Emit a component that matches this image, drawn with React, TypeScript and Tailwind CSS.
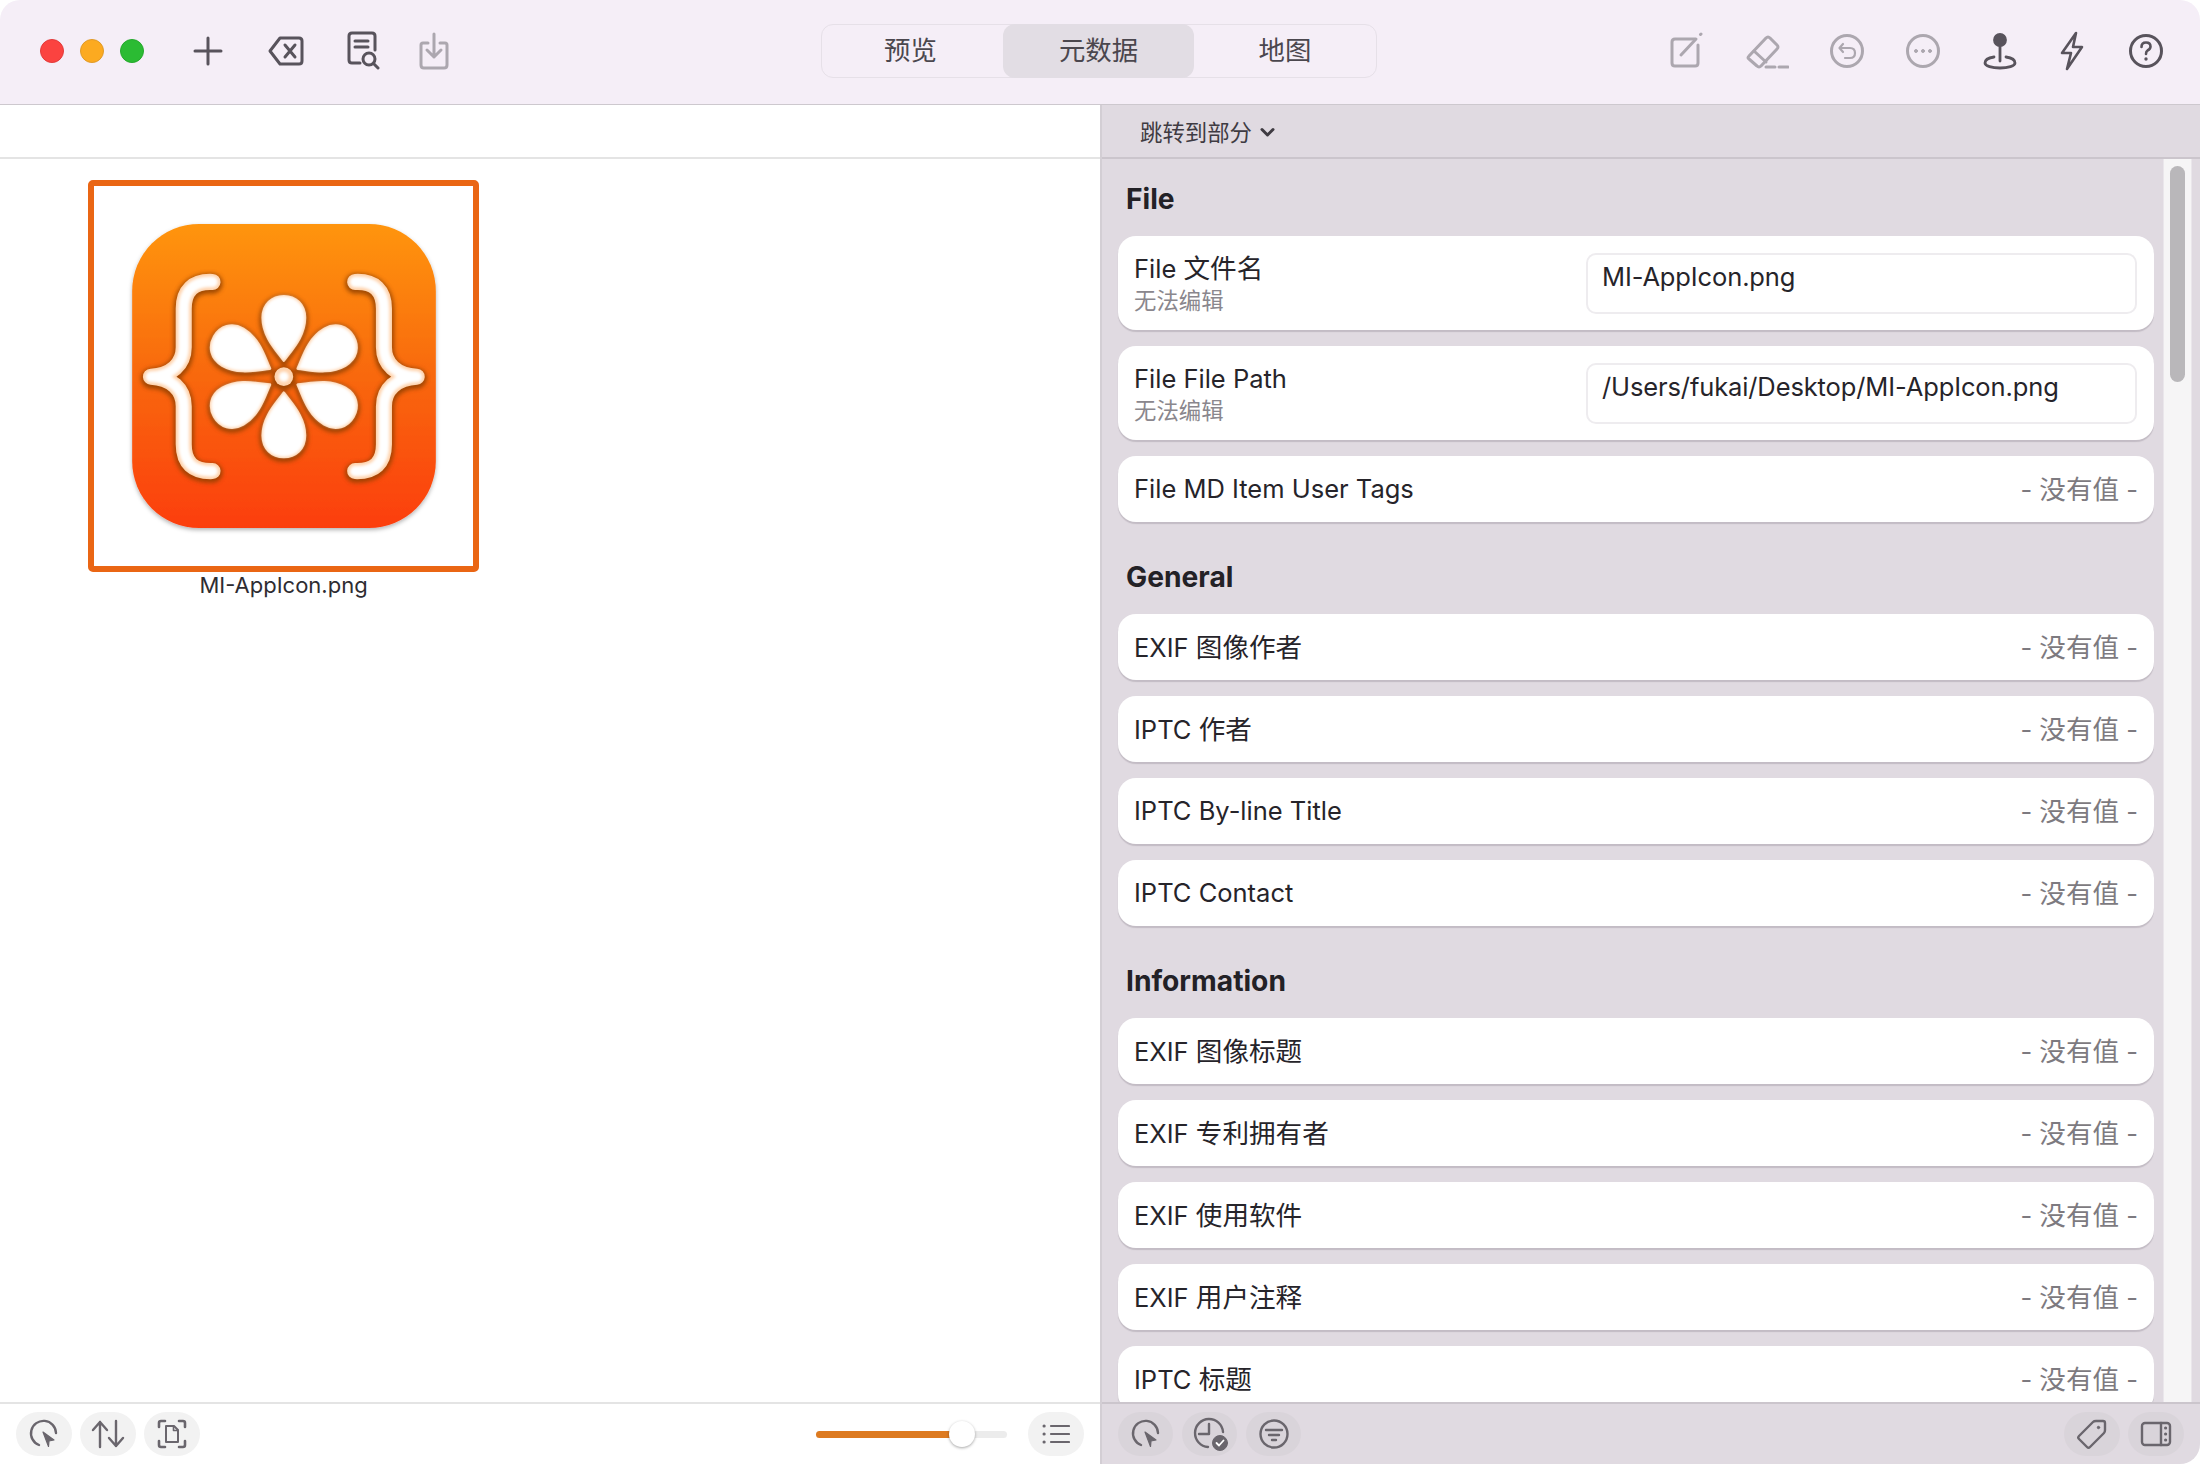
import React from 'react';

const dark = '#58535c';
const dim = '#aca7af';

const brackets = [
  'M428 365 C370 362 342 392 342 445 L342 560 C342 610 305 645 244 648 C305 651 342 686 342 736 L342 850 C342 905 370 932 428 930',
  'M854 365 C912 362 940 392 940 445 L940 560 C940 610 977 645 1038 648 C977 651 940 686 940 736 L940 850 C940 905 912 932 854 930',
];

const Mark = ({ color, width, grow, dot }: { color: string; width: number; grow: number; dot: number }) => (
  <>
    <g fill="none" stroke={color} strokeWidth={width} strokeLinecap="round" strokeLinejoin="round">
      {brackets.map((d) => <path key={d} d={d} />)}
    </g>
    {[0, 60, 120, 180, 240, 300].map((a) => (
      <path
        key={a}
        transform={`rotate(${a} 641 648)`}
        d="M641 600 C622 572 578 530 578 472 C578 432 606 408 641 408 C676 408 704 432 704 472 C704 530 660 572 641 600 Z"
        fill={color}
        stroke={color}
        strokeWidth={grow}
        strokeLinejoin="round"
      />
    ))}
    <circle cx="641" cy="648" r={dot} fill={color} />
  </>
);

const AppIcon = () => (
  <svg viewBox="188 192 907 908" className="w-[304px] h-[304px] overflow-visible">
    <defs>
      <linearGradient id="bg" x1="0" y1="0" x2="0" y2="1">
        <stop offset="0" stopColor="#ff9510" />
        <stop offset="0.5" stopColor="#f8680f" />
        <stop offset="1" stopColor="#fc3e10" />
      </linearGradient>
      <filter id="under" x="-20%" y="-20%" width="140%" height="140%">
        <feGaussianBlur stdDeviation="7" />
      </filter>
      <filter id="blur" x="-20%" y="-20%" width="140%" height="140%">
        <feGaussianBlur stdDeviation="4" />
      </filter>
      <filter id="outer" x="-5%" y="-5%" width="110%" height="110%">
        <feDropShadow dx="0" dy="6" stdDeviation="7" floodColor="#000000" floodOpacity="0.3" />
      </filter>
    </defs>
    <rect x="188" y="192" width="907" height="908" rx="200" fill="url(#bg)" filter="url(#outer)" />
    <g filter="url(#under)" transform="translate(0 5)" opacity="0.85">
      <Mark color="#8f3f00" width={60} grow={20} dot={36} />
    </g>
    <Mark color="#ffd3ad" width={48} grow={8} dot={28} />
    <g filter="url(#blur)">
      <Mark color="#ffffff" width={32} grow={0} dot={15} />
    </g>
  </svg>
);

const Ico = ({ w, h = 40, color = dark, sw = 2.6, className = '', children }: { w: number; h?: number; color?: string; sw?: number; className?: string; children: React.ReactNode }) => (
  <svg width={w} height={h} viewBox={`0 0 ${w} ${h}`} fill="none" stroke={color} strokeWidth={sw} strokeLinecap="round" strokeLinejoin="round" className={className}>
    {children}
  </svg>
);

// the Chinese runs sit a little larger than the latin text
const T = ({ text }: { text: string }) => (
  <>
    {text.split(/([\u4e00-\u9fff]+)/).map((part, i) =>
      i % 2 ? <span key={i} className="text-[26.6px]">{part}</span> : <span key={i}>{part}</span>
    )}
  </>
);

const CursorCircle = () => (
  <Ico w={32} h={32} color="#6a666d" sw={2.4}>
    <path d="M11 27 A12.5 12.5 0 1 1 28 15" />
    <path d="M15 14 L26 22 L21 23 L20.5 28.5 Z" fill="#6a666d" strokeWidth={1.2} />
  </Ico>
);

const Pill = ({ children, className = 'w-[56px] bg-[#f2f2f2]' }: { children: React.ReactNode; className?: string }) => (
  <div className={`h-[44px] rounded-[22px] flex items-center justify-center ${className}`}>{children}</div>
);

const Card = ({ label }: { label: string }) => (
  <div className="h-[66px] mb-[16px] last:mb-0 bg-white rounded-[18px] shadow-[0_2px_1px_rgba(80,70,85,0.2)] flex items-center justify-between px-[16px] leading-[34px]">
    <span className="text-[#26242a]"><T text={label} /></span>
    <span className="text-[#7d7a80]"><T text="- 没有值 -" /></span>
  </div>
);

const InputCard = ({ label, value }: { label: string; value: string }) => (
  <div className="h-[94px] mb-[16px] bg-white rounded-[18px] shadow-[0_2px_1px_rgba(80,70,85,0.2)] flex items-center justify-between pl-[16px] pr-[17px]">
    <div className="flex flex-col pt-[1px]">
      <span className="text-[#26242a] leading-[34px]"><T text={label} /></span>
      <span className="text-[#8a878d] text-[22.4px] leading-[30px]">无法编辑</span>
    </div>
    <div className="w-[551px] h-[61px] border-2 border-[#eeecef] rounded-[10px] px-[14px] pt-[5px] leading-[34px] tracking-[-0.12px] text-[#26242a]">{value}</div>
  </div>
);

const Section = ({ title, children }: { title: string; children: React.ReactNode }) => (
  <div className="mb-[38px]">
    <div className="pl-[8px] h-[34px] leading-[34px] mb-[20px] text-[28.2px] font-bold text-[#232126]">{title}</div>
    {children}
  </div>
);

export default function App() {
  return (
    <div className="w-[2200px] h-[1464px] bg-white rounded-[20px] overflow-hidden flex flex-col text-[25.5px] font-['Inter','Noto_Sans_CJK_SC',sans-serif]">
      {/* toolbar */}
      <div className="h-[105px] shrink-0 bg-[#f5eef7] border-b border-[#cdc8ce] pb-[2px] grid grid-cols-[821px_auto_1fr] items-center">
        <div className="flex items-center pl-[40px]">
          <div className="w-[24px] h-[24px] rounded-full bg-[#fb4340] border border-[#e23a3a]" />
          <div className="w-[24px] h-[24px] rounded-full bg-[#fcaa20] border border-[#e09a28] ml-[16px]" />
          <div className="w-[24px] h-[24px] rounded-full bg-[#2bbb33] border border-[#25a82c] ml-[16px]" />
          <Ico w={30} sw={3} className="ml-[49px]">
            <path d="M15 7 V33 M2 20 H28" />
          </Ico>
          <Ico w={38} sw={3} className="ml-[44px]">
            <path d="M3 20 L13 7 H32 Q35 7 35 10 V30 Q35 33 32 33 H13 Z" />
            <path d="M18 14 L28 26 M28 14 L18 26" />
          </Ico>
          <Ico w={34} h={42} sw={3} className="ml-[41px]">
            <path d="M14 33 H6 Q3 33 3 30 V6 Q3 3 6 3 H26 Q29 3 29 6 V20" />
            <path d="M9 11 H22 M9 17 H22" />
            <circle cx="23" cy="29" r="6" />
            <path d="M27.5 33.5 L32 38" />
          </Ico>
          <Ico w={30} h={38} color={dim} sw={3} className="ml-[39px]">
            <path d="M9 11 H4 Q2 11 2 13 V33 Q2 36 5 36 H25 Q28 36 28 33 V13 Q28 11 26 11 H21" />
            <path d="M15 2 V25 M8 18 L15 25 L22 18" />
          </Ico>
        </div>

        <div className="w-[556px] h-[54px] border border-[#e6e0e8] rounded-[12px] flex text-[#4b474e] text-[26.4px]">
          <div className="w-[181px] pr-[4px] flex items-center justify-center">预览</div>
          <div className="w-[191px] -my-px bg-[#e2dde4] rounded-[12px] flex items-center justify-center">元数据</div>
          <div className="flex-1 flex items-center justify-center">地图</div>
        </div>

        <div className="flex items-center justify-end pr-[37px]">
          <Ico w={34} color={dim} sw={3}>
            <path d="M26 8 H6 Q3 8 3 11 V32 Q3 35 6 35 H26 Q29 35 29 32 V14" />
            <path d="M12 24 L27 8" />
            <path d="M31.5 3.5 L32 3" />
          </Ico>
          <Ico w={44} color={dim} sw={3} className="ml-[42px]">
            <path d="M4 25 L21 7 Q23 5 25 7 L32 14 Q34 16 32 18 L16 35 Q14 37 12 35 L4 28 Q2 27 4 25 Z" />
            <path d="M9 20 L21 31" />
            <path d="M21 36 H30 M34 36 H43" />
          </Ico>
          <Ico w={34} color={dim} sw={3} className="ml-[41px]">
            <circle cx="17" cy="20" r="15.5" />
            <path d="M13 13 L9.5 17 L13 21 M10 17 H20 Q25 17 25 22 Q25 27 20 27 H15" strokeWidth={2.2} />
          </Ico>
          <Ico w={34} color={dim} sw={3} className="ml-[42px]">
            <circle cx="17" cy="20" r="15.5" />
            <circle cx="10" cy="20" r="1.5" fill={dim} strokeWidth={1} />
            <circle cx="17" cy="20" r="1.5" fill={dim} strokeWidth={1} />
            <circle cx="24" cy="20" r="1.5" fill={dim} strokeWidth={1} />
          </Ico>
          <Ico w={34} h={40} sw={2.8} className="ml-[43px]">
            <circle cx="17" cy="9" r="5.5" fill={dark} />
            <path d="M17 15 V30" />
            <path d="M11 26 C4 27 2 30 2 32 C2 35 9 37 17 37 C25 37 32 35 32 32 C32 30 30 27 23 26" />
          </Ico>
          <Ico w={24} h={40} sw={2.6} className="ml-[43px]">
            <path d="M16 2 L2 22 H11 L7 38 L22 16 H13 Z" />
          </Ico>
          <Ico w={34} sw={3} className="ml-[45px]">
            <circle cx="17" cy="20" r="15.5" />
            <path d="M12.5 16 Q12.5 11.5 17 11.5 Q21.5 11.5 21.5 15.5 Q21.5 18 18.5 19.5 Q17 20.5 17 23" strokeWidth={2.6} />
            <circle cx="17" cy="28" r="1" fill={dark} strokeWidth={1.4} />
          </Ico>
        </div>
      </div>

      <div className="flex-1 min-h-0 flex">
        {/* left pane */}
        <div className="w-[1100px] shrink-0 flex flex-col">
          <div className="h-[54px] shrink-0 border-b-2 border-[#e4e4e4]" />
          <div className="flex-1 min-h-0 pl-[88px] pt-[21px]">
            <div className="w-[391px] flex flex-col items-center">
              <div className="w-[391px] h-[392px] border-[6px] border-[#ea6614] rounded-[5px] flex items-center justify-center">
                <AppIcon />
              </div>
              <div className="-mt-[2px] text-[22px] leading-[30px] text-[#2e2c31]">MI-AppIcon.png</div>
            </div>
          </div>
          <div className="h-[62px] shrink-0 border-t-2 border-[#e4e4e4] flex items-center justify-between px-[16px]">
            <div className="flex gap-[8px]">
              <Pill><CursorCircle /></Pill>
              <Pill>
                <Ico w={34} h={30} color="#6a666d" sw={2.4}>
                  <path d="M9 28 V3 M2 11 L9 3 L16 11" />
                  <path d="M25 2 V27 M18 19 L25 27 L32 19" />
                </Ico>
              </Pill>
              <Pill>
                <Ico w={30} h={30} color="#6a666d" sw={2.6}>
                  <path d="M2 8 V4 Q2 2 4 2 H8 M22 2 H26 Q28 2 28 4 V8 M28 22 V26 Q28 28 26 28 H22 M8 28 H4 Q2 28 2 26 V22" />
                  <path d="M9 23 V7 H17 L21 11 V23 Z" strokeWidth={2} />
                  <path d="M16.5 7 V11.5 H21" strokeWidth={1.6} />
                </Ico>
              </Pill>
            </div>
            <div className="flex items-center gap-[21px]">
              <div className="relative w-[191px] h-[7px] rounded-full bg-[#ececec]">
                <div className="w-[146px] h-[7px] rounded-full bg-[#dd7a20]" />
                <div className="absolute left-[133px] top-[-10px] w-[26px] h-[26px] rounded-full bg-white shadow-[0_1px_3px_rgba(0,0,0,0.35)]" />
              </div>
              <Pill>
                <Ico w={28} h={22} color="#6a666d" sw={2.2}>
                  <path d="M9 3 H27 M9 11 H27 M9 19 H27" />
                  <path d="M2 3 H2.2 M2 11 H2.2 M2 19 H2.2" strokeWidth={3} />
                </Ico>
              </Pill>
            </div>
          </div>
        </div>

        {/* right pane */}
        <div className="flex-1 min-w-0 flex flex-col bg-[#e0dae1] border-l-2 border-[#d3ced4]">
          <div className="h-[54px] shrink-0 border-b-2 border-[#cbc5cc] flex items-center pl-[38px] pt-[3px] gap-[8px] text-[22.4px] text-[#3f3b42]">
            <span>跳转到部分</span>
            <Ico w={15} h={11} color="#3f3b42" sw={3}>
              <path d="M2 2.5 L7.5 8 L13 2.5" />
            </Ico>
          </div>
          <div className="flex-1 min-h-0 flex">
            <div className="flex-1 min-w-0 overflow-hidden pl-[16px] pt-[23px]">
              <Section title="File">
                <InputCard label="File 文件名" value="MI-AppIcon.png" />
                <InputCard label="File File Path" value="/Users/fukai/Desktop/MI-AppIcon.png" />
                <Card label="File MD Item User Tags" />
              </Section>
              <Section title="General">
                <Card label="EXIF 图像作者" />
                <Card label="IPTC 作者" />
                <Card label="IPTC By-line Title" />
                <Card label="IPTC Contact" />
              </Section>
              <Section title="Information">
                <Card label="EXIF 图像标题" />
                <Card label="EXIF 专利拥有者" />
                <Card label="EXIF 使用软件" />
                <Card label="EXIF 用户注释" />
                <Card label="IPTC 标题" />
              </Section>
            </div>
            <div className="w-[46px] shrink-0 pl-[9px] pr-[8px]">
              <div className="h-full bg-[#f6f5f6] border-x border-[#eae6eb] pt-[7px] px-[6px]">
                <div className="h-[216px] rounded-full bg-[#b9b7ba]" />
              </div>
            </div>
          </div>
          <div className="h-[62px] shrink-0 border-t-2 border-[#cbc5cc] flex items-center justify-between pl-[16px] pr-[16px]">
            <div className="flex gap-[9px]">
              <Pill className="w-[55px] bg-[#d9d4da]"><CursorCircle /></Pill>
              <Pill className="w-[55px] bg-[#d9d4da]">
                <Ico w={36} h={34} color="#6a666d" sw={2.4} className="ml-[2px]">
                  <path d="M15 30 A14 14 0 1 1 30 15" />
                  <path d="M16 7 V17 H6" />
                  <circle cx="27" cy="26" r="7.5" fill="#6a666d" strokeWidth={1} />
                  <path d="M23.5 26 L26 28.5 L30.5 23.5" stroke="#ffffff" strokeWidth={1.8} />
                </Ico>
              </Pill>
              <Pill className="w-[55px] bg-[#d9d4da]">
                <Ico w={32} h={32} color="#6a666d" sw={2.4}>
                  <circle cx="16" cy="16" r="13.5" />
                  <path d="M8 12 H24 M11 17 H21 M14 22 H18" />
                </Ico>
              </Pill>
            </div>
            <div className="flex gap-[8px]">
              <Pill className="w-[56px] bg-[#d9d4da]">
                <Ico w={32} h={32} color="#6a666d" sw={2.4}>
                  <path d="M3 18 L17 4 Q18 3 20 3 H27 Q29 3 29 5 V12 Q29 14 28 15 L14 29 Q12.5 30.5 11 29 L3 21 Q1.5 19.5 3 18 Z" />
                  <circle cx="22.5" cy="9.5" r="1.2" fill="#6a666d" strokeWidth={1} />
                </Ico>
              </Pill>
              <Pill className="w-[56px] bg-[#d9d4da]">
                <Ico w={32} h={26} color="#6a666d" sw={2.4}>
                  <rect x="2" y="2" width="28" height="22" rx="3" />
                  <path d="M21 2 V24" />
                  <path d="M25.5 7 H25.7 M25.5 13 H25.7 M25.5 19 H25.7" strokeWidth={3} />
                </Ico>
              </Pill>
            </div>
          </div>
        </div>
      </div>
    </div>
  );
}
